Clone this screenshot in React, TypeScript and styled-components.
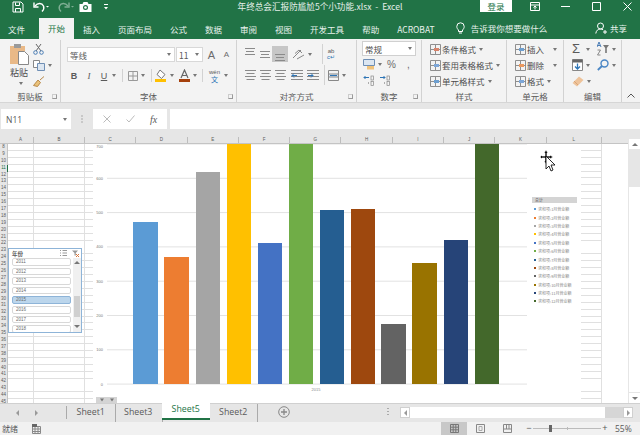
import styled, { createGlobalStyle } from "styled-components";

const GlobalStyle = createGlobalStyle`
  html, body {
    margin: 0;
    padding: 0;
    background: #fff;
  }
  * {
    box-sizing: border-box;
  }
`;

const font = `"Noto Sans CJK SC", "Open Sans", sans-serif`;

const BARS = [
  { x: 133, top: 222, color: "#5b9bd5", w: 25 },
  { x: 164, top: 257, color: "#ed7d31", w: 25 },
  { x: 196, top: 172, color: "#a5a5a5", w: 24 },
  { x: 227, top: 144, color: "#ffc000", w: 24 },
  { x: 258, top: 243, color: "#4472c4", w: 24 },
  { x: 289, top: 144, color: "#70ad47", w: 24 },
  { x: 320, top: 210, color: "#255e91", w: 24 },
  { x: 351, top: 209, color: "#9e480e", w: 24 },
  { x: 381, top: 324, color: "#636363", w: 25 },
  { x: 412, top: 263, color: "#997300", w: 25 },
  { x: 444, top: 240, color: "#264478", w: 24 },
  { x: 475, top: 144, color: "#43682b", w: 24 },
];

const AXIS = [700, 600, 500, 400, 300, 200, 100, 0];
const COLUMNS = [
  { name: "C", w: 51.3 },
  { name: "D", w: 51.3 },
  { name: "E", w: 51.3 },
  { name: "F", w: 51.3 },
  { name: "G", w: 51.3 },
  { name: "H", w: 51.3 },
  { name: "I", w: 51.3 },
  { name: "J", w: 51.3 },
  { name: "K", w: 51.3 },
  { name: "L", w: 55 },
];
const ROWS = Array.from({ length: 38 }, (_, i) => i + 8);
const YEARS = ["2011", "2012", "2013", "2014", "2015", "2016", "2017", "2018"];
const TABS = ["插入", "页面布局", "公式", "数据", "审阅", "视图", "开发工具", "帮助", "ACROBAT"];
const SHEETS = ["Sheet1", "Sheet3", "Sheet5", "Sheet2"];

function Ico({ w, h, children }: { w: number; h: number; children: React.ReactNode }) {
  return (
    <svg width={w} height={h} viewBox={`0 0 ${w} ${h}`} fill="none" style={{ display: "block", flexShrink: 0 }}>
      {children}
    </svg>
  );
}

// horizontal text lines used by the alignment buttons
function Lines({ y, widths, w }: { y: number[]; widths: number[]; w: number }) {
  return (
    <>
      {y.map((v, i) => (
        <path key={v} d={`M${(w - widths[i]) / 2} ${v + 0.5}h${widths[i]}`} stroke="#8a8a8a" />
      ))}
    </>
  );
}

function CellsIcon({ accent }: { accent: string }) {
  return (
    <Ico w={13} h={13}>
      <path d="M1.5 1.5h10v10h-10zM1.5 6.5h10M6.5 1.5v10" stroke="#8f8f8f" />
      <rect x="5" y="5" width="5" height="3" fill={accent} />
    </Ico>
  );
}

function DecimalIcon({ dir }: { dir: "left" | "right" }) {
  return (
    <DecimalWrap>
      <Ico w={13} h={11}>
        <path d={dir === "left" ? "M6 2.5H1M2.5 1 1 2.5 2.5 4" : "M1 2.5h5M4.5 1 6 2.5 4.5 4"} stroke="#2e75b6" />
        <path d="M5 8h1" stroke="#666" />
        <rect x="8" y="1" width="2.5" height="4" stroke="#888" strokeWidth=".7" />
        <rect x="8" y="6.5" width="2.5" height="4" stroke="#888" strokeWidth=".7" />
      </Ico>
    </DecimalWrap>
  );
}

export default function App() {
  return (
    <Page>
      <GlobalStyle />
      <TitleBar>
        <Quick>
          <Slot $left={0}>
            <Ico w={12} h={12}>
              <path d="M1 1h8l2 2v8H1z" stroke="#fff" />
              <path d="M3.5 1.5v3h4v-3M3.5 11V7.5h5V11" stroke="#fff" />
            </Ico>
          </Slot>
          <Slot $left={8}>
            <Ico w={18} h={12}>
              <path d="M3 5c3-3.5 7-3 8.5 0 .8 2 0 4-1.500 5.500" stroke="#fff" strokeWidth="1.4" />
              <path d="M2 1.500V6h4.500" stroke="#fff" strokeWidth="1.4" />
              <path d="M14 5h3l-1.500 1.600z" fill="#fff" />
            </Ico>
          </Slot>
          <Slot $left={7}>
            <Ico w={18} h={12}>
              <path d="M11 5C8 1.500 4 2 2.500 5 1.700 7 2.500 9 4 10.500" stroke="#7fae94" strokeWidth="1.4" />
              <path d="M12 1.500V6H7.500" stroke="#7fae94" strokeWidth="1.4" />
              <path d="M14 5h3l-1.500 1.600z" fill="#7fae94" />
            </Ico>
          </Slot>
          <Slot $left={4}>
            <Ico w={13} h={12}>
              <path d="M.5 3h3l1-2h4l1 2h3v8H.5z" fill="#fff" />
              <circle cx="6.500" cy="6.500" r="2.500" fill="#217346" />
              <circle cx="6.500" cy="6.500" r="1.300" fill="#fff" />
            </Ico>
          </Slot>
          <Slot $left={11}>
            <Ico w={6} h={10}>
              <path d="M1 2.500h4" stroke="#fff" />
              <path d="M1 5h4L3 7.500z" fill="#fff" />
            </Ico>
          </Slot>
        </Quick>
        <DocTitle>年终总会汇报防尴尬5个小功能.xlsx&nbsp; - &nbsp;Excel</DocTitle>
        <WindowArea>
          <Login>登录</Login>
          <WinBtn>
            <Ico w={10} h={9}>
              <path d="M.5.500h9v8h-9zM.5 3h9" stroke="#fff" />
              <path d="M5 7.500V4M3.500 5.500 5 4l1.500 1.500" stroke="#fff" />
            </Ico>
          </WinBtn>
          <WinBtn>
            <Ico w={9} h={9}>
              <path d="M0 4.500h9" stroke="#fff" />
            </Ico>
          </WinBtn>
          <WinBtn>
            <Ico w={9} h={9}>
              <path d="M.5.500h8v8h-8z" stroke="#fff" />
            </Ico>
          </WinBtn>
          <WinBtn>
            <Ico w={9} h={9}>
              <path d="M.5.500l8 8M8.500.500l-8 8" stroke="#fff" />
            </Ico>
          </WinBtn>
        </WindowArea>
      </TitleBar>

      <TabStrip>
        <FileTab>文件</FileTab>
        <ActiveTab>开始</ActiveTab>
        {TABS.map((t) => (
          <Tab key={t}>{t}</Tab>
        ))}
        <TellMe>
          <Ico w={9} h={12}>
            <path d="M2.500 8C1.500 7 .8 6 .8 4.500a3.700 3.700 0 0 1 7.400 0C8.200 6 7.500 7 6.500 8v1.500h-4zM3 11h3" stroke="#fff" />
          </Ico>
          告诉我你想要做什么
        </TellMe>
        <Share>
          <Ico w={12} h={12}>
            <circle cx="5.500" cy="4" r="3" stroke="#fff" />
            <path d="M.8 11.500C1.200 8.500 3 7 5.500 7c1 0 2 .3 2.700.9M8 10h4M10 8v4" stroke="#fff" />
          </Ico>
          共享
        </Share>
      </TabStrip>

      <Ribbon>
        <Group $w={61}>
          <ClipBody>
            <PasteCol>
              <Ico w={21} h={22}>
                <path d="M1 3h15v18H1z" fill="#e9b987" />
                <path d="M5 1h7v4H5z" fill="#9a9a9a" />
                <path d="M9.500 8.500h6l4 4v9h-10z" fill="#fff" stroke="#888" />
              </Ico>
              <PasteLabel>粘贴</PasteLabel>
              <Caret />
            </PasteCol>
            <ClipTools>
              <Ico w={11} h={11}>
                <path d="M3 0l5 7M8 0 3 7" stroke="#666" />
                <circle cx="2.500" cy="8.500" r="1.800" stroke="#4a7db5" />
                <circle cx="8.500" cy="8.500" r="1.800" stroke="#4a7db5" />
              </Ico>
              <ToolRow>
                <Ico w={12} h={11}>
                  <path d="M.5.500h6v7h-6z" fill="#fff" stroke="#888" />
                  <path d="M4.500 3.500h7v7h-7z" fill="#dce6f1" stroke="#6f8fb5" />
                </Ico>
                <Caret />
              </ToolRow>
              <Ico w={12} h={11}>
                <path d="M7 4 11 .5M.5 9.500 5 4l2.500 2.500-3 4z" stroke="#b8894a" fill="#eac27a" />
              </Ico>
            </ClipTools>
          </ClipBody>
          <GroupFoot>
            剪贴板
            <Launcher />
          </GroupFoot>
        </Group>

        <Group $w={176}>
          <FontBody>
            <Row>
              <FontSelect $w={108}>
                等线
                <Caret />
              </FontSelect>
              <FontSelect $w={27}>
                11
                <Caret />
              </FontSelect>
              <GrowA $size={11}>A</GrowA>
              <GrowA $size={8}>A</GrowA>
            </Row>
            <Row>
              <FmtBtn $left={2}>
                <b>B</b>
              </FmtBtn>
              <FmtBtn $left={5}>
                <i style={{ fontFamily: "Liberation Serif" }}>I</i>
              </FmtBtn>
              <FmtBtn $left={5}>
                <u>U</u>
              </FmtBtn>
              <Caret />
              <Sep $left={6} />
              <Slot $left={5}>
                <Ico w={10} h={10}>
                  <path d="M.5.500h9v9h-9zM.5 5h9M5 .5v9" stroke="#999" />
                </Ico>
              </Slot>
              <Caret />
              <Sep $left={6} />
              <Slot $left={3}>
                <Ico w={12} h={13}>
                  <path d="M5 1l5 4.500-3.500 4L2 5.500z" fill="#fff" stroke="#777" />
                  <rect y="10" width="11" height="3" fill="#ffc000" />
                </Ico>
              </Slot>
              <Caret />
              <Slot $left={5}>
                <Ico w={11} h={13}>
                  <path d="M2 9 5.500 1 9 9M3.300 6.500h4.400" stroke="#666" strokeWidth="1.2" />
                  <rect y="10" width="11" height="3" fill="#a5400c" />
                </Ico>
              </Slot>
              <Caret />
              <Sep $left={5} />
              <WenBtn>
                <WenTop>wén</WenTop>
                <WenBottom>文</WenBottom>
              </WenBtn>
              <Caret />
            </Row>
          </FontBody>
          <GroupFoot>
            字体
            <Launcher />
          </GroupFoot>
        </Group>

        <Group $w={120}>
          <AlignBody>
            <AlignRow>
              <Slot $left={0}>
                <Ico w={10} h={16}>
                  <Lines w={10} y={[2, 5, 8]} widths={[10, 8, 10]} />
                </Ico>
              </Slot>
              <Slot $left={5}>
                <Ico w={10} h={16}>
                  <Lines w={10} y={[5, 8, 11]} widths={[10, 8, 10]} />
                </Ico>
              </Slot>
              <AlignSelected>
                <Ico w={10} h={16}>
                  <Lines w={10} y={[8, 11, 14]} widths={[10, 8, 10]} />
                </Ico>
              </AlignSelected>
              <Slot $left={4}>
                <Ico w={13} h={12}>
                  <path d="M1 10 9 2M3 5.500 7 2l3 3M5 11l7-4" stroke="#888" />
                </Ico>
              </Slot>
              <Caret />
              <Sep $left={10} $tall />
              <WrapBtn>
                <WenTop>ab</WenTop>
                <WrapC>c↵</WrapC>
              </WrapBtn>
            </AlignRow>
            <AlignRow>
              {[0, 4, 4].map((left, i) => (
                <Slot $left={left} key={i}>
                  <Ico w={11} h={11}>
                    <Lines w={11} y={[0, 3, 6, 9]} widths={[11, 8, 11, 8]} />
                  </Ico>
                </Slot>
              ))}
              <Slot $left={5}>
                <Ico w={12} h={11}>
                  <Lines w={12} y={[0, 3, 6, 9]} widths={[12, 12, 12, 12]} />
                  <path d="M6 5.500H1M3 3.500l-2 2 2 2" stroke="#2e75b6" />
                </Ico>
              </Slot>
              <Slot $left={4}>
                <Ico w={12} h={11}>
                  <Lines w={12} y={[0, 3, 6, 9]} widths={[12, 12, 12, 12]} />
                  <path d="M1 5.500h5M4 3.500l2 2-2 2" stroke="#2e75b6" />
                </Ico>
              </Slot>
              <Sep $left={5} $tall />
              <Slot $left={3}>
                <Ico w={11} h={11}>
                  <path d="M.5.500h10v10H.5z" stroke="#888" />
                  <path d="M.5 4h10v3H.5z" fill="#dce6f1" stroke="#888" />
                  <path d="M2 5.500h7" stroke="#2e75b6" />
                </Ico>
              </Slot>
              <Caret />
            </AlignRow>
          </AlignBody>
          <GroupFoot>
            对齐方式
            <Launcher />
          </GroupFoot>
        </Group>

        <Group $w={65}>
          <NumberBody>
            <NumberSelect>
              常规
              <Caret />
            </NumberSelect>
            <NumberRow>
              <Ico w={12} h={11}>
                <path d="M.5.500h11v6H.5z" fill="#dce6f1" stroke="#6f8fb5" />
                <path d="M4 7h7v3.500H4z" fill="#f0c27a" />
              </Ico>
              <Caret />
              <NumGlyph>%</NumGlyph>
              <NumGlyph>,</NumGlyph>
            </NumberRow>
            <NumberRow>
              <DecimalIcon dir="left" />
              <DecimalIcon dir="right" />
            </NumberRow>
          </NumberBody>
          <GroupFoot>
            数字
            <Launcher />
          </GroupFoot>
        </Group>

        <Group $w={85}>
          <ListBody>
            <ListItem>
              <CellsIcon accent="#d9836a" />
              条件格式
              <Caret />
            </ListItem>
            <ListItem>
              <CellsIcon accent="#7da7d9" />
              套用表格格式
              <Caret />
            </ListItem>
            <ListItem>
              <CellsIcon accent="#6d9fd0" />
              单元格样式
              <Caret />
            </ListItem>
          </ListBody>
          <GroupFoot>样式</GroupFoot>
        </Group>

        <Group $w={57}>
          <ListBody>
            <ListItem>
              <CellsIcon accent="#6d9fd0" />
              插入
              <WideCaret />
            </ListItem>
            <ListItem>
              <CellsIcon accent="#ed9a5f" />
              删除
              <WideCaret />
            </ListItem>
            <ListItem>
              <CellsIcon accent="#7da7d9" />
              格式
              <Caret />
            </ListItem>
          </ListBody>
          <GroupFoot>单元格</GroupFoot>
        </Group>

        <Group $w={58}>
          <EditBody>
            <EditRow>
              <Sigma>Σ</Sigma>
              <Caret />
              <SortGlyph>
                <Ico w={12} h={14}>
                  <path d="M0 5 2 0l2 5M.7 3.500h2.600" stroke="#4a7db5" />
                  <path d="M.5 8h3L.5 13h3" stroke="#888" />
                  <path d="M6 3h6L9.800 6v5H8.200V6z" fill="#777" />
                </Ico>
              </SortGlyph>
              <Caret />
            </EditRow>
            <EditRow>
              <Slot $left={0}>
                <Ico w={11} h={12}>
                  <path d="M.5.500h10v11H.5z" fill="#fff" stroke="#888" />
                  <path d="M.5.500h10v3H.5z" fill="#666" />
                  <path d="M5.500 4.500v5M3 7.500 5.500 10 8 7.500" stroke="#2e75b6" strokeWidth="1.3" />
                </Ico>
              </Slot>
              <Caret />
              <SortGlyph>
                <Ico w={12} h={12}>
                  <circle cx="7.500" cy="4.500" r="3.500" stroke="#4a86c5" strokeWidth="1.4" />
                  <path d="M5 7 .8 11" stroke="#4a86c5" strokeWidth="1.8" />
                </Ico>
              </SortGlyph>
              <Caret />
            </EditRow>
            <EditRow>
              <Slot $left={0}>
                <Ico w={12} h={11}>
                  <path d="M.5 7 7 .5 11.500 4 5 10.500z" fill="#eec39a" />
                  <path d="M2 5l4 4" stroke="#d9a578" />
                </Ico>
              </Slot>
              <Caret />
            </EditRow>
          </EditBody>
          <GroupFoot>编辑</GroupFoot>
        </Group>

        <Collapse>
          <Ico w={8} h={5}>
            <path d="M.5 4.500 4 1l3.500 3.500" stroke="#555" />
          </Ico>
        </Collapse>
      </Ribbon>

      <FormulaZone>
        <NameBox>
          N11
          <Caret />
        </NameBox>
        <Grip />
        <FormulaBtns>
          <Ico w={8} h={8}>
            <path d="M.5.500l7 7M7.500.500l-7 7" stroke="#bbb" />
          </Ico>
          <Ico w={9} h={8}>
            <path d="M.5 4.500 3 7 8.500.500" stroke="#bbb" />
          </Ico>
          <Fx>fx</Fx>
        </FormulaBtns>
        <FormulaInput />
      </FormulaZone>

      <SheetZone>
        <SheetMain>
          <ColHeaders>
            <Corner />
            <ColHead $w={26}>A</ColHead>
            <ColHead $w={51}>B</ColHead>
            {COLUMNS.map((c) => (
              <ColHead key={c.name} $w={c.w}>
                {c.name}
              </ColHead>
            ))}
          </ColHeaders>
          <GridArea>
            <RowHeaders>
              {ROWS.map((r) => (
                <RowHead key={r} $active={r === 11}>
                  {r}
                </RowHead>
              ))}
            </RowHeaders>
            <Cells $w={26} />
            <Cells $w={51} />
            {COLUMNS.map((c) => (
              <Cells key={c.name} $w={c.w} />
            ))}

            <Slicer>
              <SlicerHead>
                年份
                <SlicerIcons>
                  <Ico w={7} h={6}>
                    <path d="M0 .5h1M0 3h1M0 5.500h1M2.500.5H7M2.500 3H7M2.500 5.500H7" stroke="#999" />
                  </Ico>
                  <Ico w={7} h={7}>
                    <path d="M0 .5h6L3.800 3v2.500H2.500V3z" fill="#999" />
                    <path d="M4 4l3 3M7 4 4 7" stroke="#d9763a" />
                  </Ico>
                </SlicerIcons>
              </SlicerHead>
              <SlicerBody>
                <SlicerList>
                  {YEARS.map((y) => (
                    <SlicerItem key={y} $on={y === "2015"}>
                      {y}
                    </SlicerItem>
                  ))}
                </SlicerList>
                <SlicerScroll>
                  <Tri $up />
                  <SlicerThumb />
                  <Tri />
                </SlicerScroll>
              </SlicerBody>
            </Slicer>

            <ChartFrame>
              <svg width="439" height="259" viewBox="93 144 439 259" style={{ display: "block", flexShrink: 0 }}>
                {AXIS.map((v, i) => {
                  const y = 144 + i * 34.3;
                  return (
                    <g key={v}>
                      <line x1="107" x2="527" y1={y} y2={y} stroke="#e2e2e2" strokeWidth="1" />
                      <text
                        x="103"
                        y={i === 0 ? y + 3.5 : y + 1.5}
                        textAnchor="end"
                        fontSize="4"
                        fill="#777"
                        fontFamily="Liberation Sans"
                      >
                        {v}
                      </text>
                    </g>
                  );
                })}
                {BARS.map((b) => (
                  <rect key={b.x} x={b.x} y={b.top} width={b.w} height={384 - b.top} fill={b.color} />
                ))}
                <text x="316" y="391" textAnchor="middle" fontSize="4" fill="#888" fontFamily="Liberation Sans">
                  2015
                </text>
              </svg>
              <Legend>
                <LegendHead>总计</LegendHead>
                {BARS.map((b, i) => (
                  <LegendItem key={b.x}>
                    <LegendDot style={{ background: b.color }} />
                    求和项:{i + 1}月营业额
                  </LegendItem>
                ))}
              </Legend>
              <FieldBtn>
                <Ico w={14} h={4}>
                  <path d="M0 .5h4L2 3.500zM10 .5h4l-2 3z" fill="#777" />
                </Ico>
              </FieldBtn>
            </ChartFrame>

            <MoveCursor>
              <svg width="16" height="22" viewBox="0 0 16 22">
                <path d="M6 0 8 3H7v3h3V5l3 2-3 2V8H7v3h1l-2 3-2-3h1V8H2v1L0 7l2-2v1h3V3H4z" fill="#111" stroke="#fff" strokeWidth=".6" />
                <path d="M6 6v13l3-3 2 5 2-1-2-5h4z" fill="#fff" stroke="#111" strokeWidth=".9" />
              </svg>
            </MoveCursor>
          </GridArea>
        </SheetMain>
        <VScroll>
          <ScrollArrow>
            <Tri $up />
          </ScrollArrow>
          <VTrack>
            <VThumb />
          </VTrack>
          <ScrollArrow>
            <Tri />
          </ScrollArrow>
        </VScroll>
      </SheetZone>

      <SheetBar>
        <SheetNav>
          <NavTri $left />
          <NavTri />
        </SheetNav>
        {SHEETS.map((s) => (
          <SheetTab key={s} $on={s === "Sheet5"}>
            {s}
          </SheetTab>
        ))}
        <AddSheet>
          <Ico w={12} h={12}>
            <circle cx="6" cy="6" r="5.300" stroke="#888" />
            <path d="M3 6h6M6 3v6" stroke="#888" strokeWidth="1.3" />
          </Ico>
        </AddSheet>
        <BarGrip />
        <HScroll>
          <HArrow>
            <NavTri $left />
          </HArrow>
          <HThumb />
          <HArrow>
            <NavTri />
          </HArrow>
        </HScroll>
      </SheetBar>

      <StatusBar>
        <StatusText>就绪</StatusText>
        <MacroIcon>
          <Ico w={9} h={10}>
            <path d="M.5 2.500h8v7h-8zM.5 5h8M.5 7.500h8M3 2.500v7M6 2.500v7" stroke="#888" />
            <rect width="5" height="3" fill="#666" />
          </Ico>
        </MacroIcon>
        <ViewBtn $on>
          <Ico w={9} h={9}>
            <path d="M.5.500h8v8h-8zM.5 3.200h8M.5 5.800h8M3.200.5v8M5.800.5v8" stroke="#777" />
          </Ico>
        </ViewBtn>
        <ViewBtn>
          <Ico w={9} h={9}>
            <path d="M.5.500h8v8h-8z" stroke="#888" />
            <path d="M3 2.500h3v4H3z" stroke="#aaa" />
          </Ico>
        </ViewBtn>
        <ViewBtn>
          <Ico w={9} h={9}>
            <path d="M.5.500h8v8h-8zM.5 5h8M3.500.5V5M6 .5V5" stroke="#888" />
          </Ico>
        </ViewBtn>
        <ZoomArea>
          <ZoomSign>−</ZoomSign>
          <ZoomTrack>
            <ZoomTick />
            <ZoomThumb />
          </ZoomTrack>
          <ZoomSign>+</ZoomSign>
          <ZoomText>55%</ZoomText>
        </ZoomArea>
      </StatusBar>
    </Page>
  );
}

const Page = styled.div`
  width: 640px;
  height: 435px;
  display: flex;
  flex-direction: column;
  overflow: hidden;
  font-family: ${font};
  color: #4d4d4d;
  background: #e6e6e6;
`;

const TitleBar = styled.header`
  height: 19px;
  flex-shrink: 0;
  background: #217346;
  display: grid;
  grid-template-columns: 1fr auto 1fr;
  color: #e4efe9;
`;

const Quick = styled.div`
  display: flex;
  align-items: center;
  padding: 0 0 5px 12px;
`;

const DocTitle = styled.div`
  font-size: 8.6px;
  line-height: 13px;
  white-space: nowrap;
`;

const WindowArea = styled.div`
  display: flex;
  justify-content: flex-end;
  margin-right: -3px;
`;

const Login = styled.div`
  width: 32px;
  height: 12px;
  background: #fff;
  color: #217346;
  font-size: 8.5px;
  line-height: 12px;
  text-align: center;
  margin-right: 7px;
`;

const WinBtn = styled.div`
  width: 31px;
  height: 12px;
  display: flex;
  align-items: center;
  justify-content: center;
`;

const TabStrip = styled.nav`
  height: 20px;
  flex-shrink: 0;
  background: #217346;
  display: flex;
  font-size: 8.5px;
  color: #e8f2ed;
  white-space: nowrap;
`;

const Tab = styled.div`
  padding: 4px 9px 0;
`;

const FileTab = styled(Tab)`
  padding-left: 8px;
  padding-right: 14px;
`;

const ActiveTab = styled(Tab)`
  width: 35px;
  padding: 4px 0 0;
  margin-top: -1px;
  text-align: center;
  background: #f3f3f3;
  color: #217346;
`;

const TellMe = styled.div`
  display: flex;
  align-items: center;
  gap: 6px;
  padding: 0 0 2px 12px;
`;

const Share = styled.div`
  margin-left: auto;
  display: flex;
  align-items: center;
  gap: 3px;
  padding: 0 13px 2px 0;
`;

const Ribbon = styled.section`
  height: 64px;
  flex-shrink: 0;
  background: #f3f3f3;
  display: flex;
  font-size: 8.5px;
  border-bottom: 1px solid #d6d6d6;
`;

const Group = styled.div<{ $w: number }>`
  width: ${(p) => p.$w}px;
  height: 62px;
  flex-shrink: 0;
  margin-top: 1px;
  border-right: 1px solid #d2d2d2;
  display: flex;
  flex-direction: column;
  position: relative;
`;

const GroupFoot = styled.div`
  height: 12px;
  flex-shrink: 0;
  font-size: 8.5px;
  line-height: 12px;
  text-align: center;
  color: #5a5a5a;
`;

const Launcher = styled.span`
  position: absolute;
  right: 3px;
  bottom: 3px;
  width: 5px;
  height: 5px;
  border: 1px solid #999;
  border-top-color: #ccc;
  border-left-color: #ccc;
`;

const Caret = styled.span`
  display: inline-block;
  flex-shrink: 0;
  width: 0;
  height: 0;
  margin-left: 3px;
  border-left: 2.5px solid transparent;
  border-right: 2.5px solid transparent;
  border-top: 3px solid #777;
`;

const WideCaret = styled(Caret)`
  margin-left: 9px;
`;

const ClipBody = styled.div`
  flex: 1;
  display: flex;
`;

const PasteCol = styled.div`
  width: 33px;
  padding: 3px 0 0 5px;
  display: flex;
  flex-direction: column;
  align-items: center;
`;

const PasteLabel = styled.div`
  font-size: 9px;
  line-height: 12px;
  margin: 2px 0 3px;
`;

const ClipTools = styled.div`
  display: flex;
  flex-direction: column;
  gap: 5px;
  padding-top: 4px;
`;

const ToolRow = styled.div`
  display: flex;
  align-items: center;
`;

const FontBody = styled.div`
  flex: 1;
  display: flex;
  flex-direction: column;
  gap: 6px;
  padding: 7px 0 0 6px;
`;

const Row = styled.div`
  display: flex;
  align-items: center;
  height: 15px;
`;

const FontSelect = styled.div<{ $w: number }>`
  width: ${(p) => p.$w}px;
  height: 15px;
  margin-right: 1px;
  background: #fff;
  border: 1px solid #d8d8d8;
  display: flex;
  align-items: center;
  justify-content: space-between;
  padding: 0 3px 0 2px;
  font-size: 8.5px;
  color: #5a5a5a;
`;

const GrowA = styled.div<{ $size: number }>`
  width: 15px;
  text-align: center;
  font-family: "Liberation Sans", sans-serif;
  font-size: ${(p) => p.$size}px;
  color: #6b6b6b;
`;

const FmtBtn = styled.div<{ $left: number }>`
  width: 10px;
  margin-left: ${(p) => p.$left}px;
  text-align: center;
  font-family: "Liberation Sans", sans-serif;
  font-size: 9px;
  color: #5a5a5a;
`;

const Sep = styled.div<{ $left: number; $tall?: boolean }>`
  width: 1px;
  height: ${(p) => (p.$tall ? 20 : 13)}px;
  flex-shrink: 0;
  margin-left: ${(p) => p.$left}px;
  background: #d2d2d2;
`;

const Slot = styled.div<{ $left: number }>`
  margin-left: ${(p) => p.$left}px;
  flex-shrink: 0;
`;

const WenBtn = styled.div`
  margin-left: 5px;
  width: 13px;
  display: flex;
  flex-direction: column;
  align-items: center;
`;

const WenTop = styled.div`
  font-family: "Liberation Sans", sans-serif;
  font-size: 6px;
  line-height: 6px;
  color: #5a5a5a;
`;

const WenBottom = styled.div`
  font-size: 7px;
  line-height: 8px;
  color: #2e75b6;
`;

const AlignBody = styled.div`
  flex: 1;
  display: flex;
  flex-direction: column;
  padding: 4px 0 0 8px;
  gap: 1px;
`;

const AlignRow = styled.div`
  display: flex;
  align-items: center;
  height: 20px;
`;

const AlignSelected = styled.div`
  width: 16px;
  height: 16px;
  margin-left: 2px;
  display: flex;
  justify-content: center;
  background: #c6c6c6;
`;

const WrapBtn = styled.div`
  display: flex;
  flex-direction: column;
  align-items: center;
  margin-left: 4px;
`;

const WrapC = styled(WenTop)`
  color: #2e75b6;
`;

const NumberBody = styled.div`
  flex: 1;
  padding: 1px 0 0 5px;
  display: flex;
  flex-direction: column;
  gap: 1.5px;
`;

const NumberSelect = styled.div`
  width: 54px;
  height: 15px;
  background: #fff;
  border: 1px solid #d0d0d0;
  display: flex;
  align-items: center;
  justify-content: space-between;
  padding: 0 3px 0 2px;
  font-size: 8.5px;
`;

const NumberRow = styled.div`
  display: flex;
  align-items: center;
  height: 14px;
  padding-left: 1px;
`;

const NumGlyph = styled.div`
  width: 15px;
  margin-left: 2px;
  text-align: center;
  font-family: "Liberation Sans", sans-serif;
  font-size: 10px;
  color: #6b6b6b;
`;

const DecimalWrap = styled.div`
  width: 16px;
  display: flex;
`;

const ListBody = styled.div`
  flex: 1;
  display: flex;
  flex-direction: column;
  gap: 2px;
  padding: 2px 0 0 7px;
`;

const ListItem = styled.div`
  height: 14px;
  display: flex;
  align-items: center;
  white-space: nowrap;
  font-size: 8.5px;
`;

const EditBody = styled.div`
  flex: 1;
  display: flex;
  flex-direction: column;
  gap: 2px;
  padding: 2px 0 0 8px;
`;

const EditRow = styled.div`
  height: 14px;
  display: flex;
  align-items: center;
`;

const Sigma = styled.div`
  width: 11px;
  font-family: "Liberation Sans", sans-serif;
  font-size: 13px;
  line-height: 14px;
  color: #5a5a5a;
`;

const SortGlyph = styled.div`
  margin-left: 7px;
  flex-shrink: 0;
`;

const Collapse = styled.div`
  flex: 1;
  display: flex;
  justify-content: center;
  align-items: flex-end;
  padding-bottom: 4px;
`;

const FormulaZone = styled.div`
  height: 34px;
  flex-shrink: 0;
  background: #e6e6e6;
  display: flex;
  padding: 6px 0 8px 1px;
`;

const NameBox = styled.div`
  width: 70px;
  background: #fff;
  display: flex;
  align-items: center;
  justify-content: space-between;
  padding: 0 4px 0 5px;
  font-family: "Open Sans", sans-serif;
  font-size: 8.5px;
  color: #5a5a5a;
`;

const Grip = styled.div`
  width: 22px;
  flex-shrink: 0;
  margin: 5px 0;
  background: radial-gradient(circle, #aaa 0.8px, transparent 1px) center / 2px 3px repeat-y;
`;

const FormulaBtns = styled.div`
  width: 74px;
  background: #fff;
  display: flex;
  align-items: center;
  gap: 15px;
  padding-left: 10px;
`;

const Fx = styled.div`
  font-family: "Liberation Serif", serif;
  font-style: italic;
  font-size: 10px;
  color: #5a5a5a;
`;

const FormulaInput = styled.div`
  flex: 1;
  margin-left: 3px;
  background: #fff;
`;

const SheetZone = styled.div`
  flex: 1;
  min-height: 0;
  display: flex;
`;

const SheetMain = styled.div`
  width: 628px;
  display: flex;
  flex-direction: column;
  overflow: hidden;
`;

const ColHeaders = styled.div`
  height: 7px;
  flex-shrink: 0;
  display: flex;
  background: #e6e6e6;
  border-bottom: 1px solid #c4c4c4;
  font-family: "Liberation Sans", sans-serif;
  font-size: 4.5px;
  line-height: 6px;
  color: #5a5a5a;
`;

const Corner = styled.div`
  width: 8px;
  flex-shrink: 0;
`;

const ColHead = styled.div<{ $w: number }>`
  width: ${(p) => p.$w}px;
  flex-shrink: 0;
  text-align: center;
  border-right: 1px solid #bdbdbd;
`;

const GridArea = styled.div`
  flex: 1;
  min-height: 0;
  position: relative;
  display: flex;
  background: #fff;
`;

const RowHeaders = styled.div`
  width: 8px;
  flex-shrink: 0;
  background: #e6e6e6;
  overflow: hidden;
`;

const RowHead = styled.div<{ $active: boolean }>`
  height: 6.9px;
  font-family: "Liberation Sans", sans-serif;
  font-size: 4.5px;
  line-height: 6.9px;
  text-align: center;
  color: ${(p) => (p.$active ? "#217346" : "#5a5a5a")};
  border-right: ${(p) => (p.$active ? "1.5px solid #217346" : "1px solid #c4c4c4")};
`;

const Cells = styled.div<{ $w: number }>`
  width: ${(p) => p.$w}px;
  flex-shrink: 0;
  border-right: 1px solid #e0e0e0;
  background: repeating-linear-gradient(to bottom, transparent 0, transparent 5.9px, #e0e0e0 5.9px, #e0e0e0 6.9px);
`;

const Slicer = styled.aside`
  position: absolute;
  left: 8px;
  top: 104px;
  width: 74px;
  height: 85px;
  background: #fff;
  border: 1px solid #8eb4d8;
  display: flex;
  flex-direction: column;
  overflow: hidden;
`;

const SlicerHead = styled.div`
  height: 9px;
  flex-shrink: 0;
  display: flex;
  align-items: center;
  justify-content: space-between;
  padding: 0 2px 0 3px;
  font-size: 5.5px;
  font-weight: 700;
  color: #5a5a5a;
`;

const SlicerIcons = styled.div`
  display: flex;
  gap: 5px;
`;

const SlicerBody = styled.div`
  flex: 1;
  min-height: 0;
  display: flex;
  padding-left: 3px;
`;

const SlicerList = styled.div`
  width: 59px;
  display: flex;
  flex-direction: column;
  gap: 2px;
  overflow: hidden;
`;

const SlicerItem = styled.div<{ $on: boolean }>`
  height: 7.6px;
  flex-shrink: 0;
  border: 1px solid ${(p) => (p.$on ? "#8eb4d8" : "#d8d8d8")};
  border-radius: 2px;
  background: ${(p) => (p.$on ? "#bcd6ec" : "#fff")};
  font-family: "Liberation Sans", sans-serif;
  font-size: 4.5px;
  line-height: 5.6px;
  padding-left: 3px;
  color: #6b6b6b;
`;

const SlicerScroll = styled.div`
  width: 8px;
  margin-left: 2px;
  padding: 3px 0 4px;
  background: #f0f0f0;
  display: flex;
  flex-direction: column;
  align-items: center;
  justify-content: space-between;
  position: relative;
`;

const SlicerThumb = styled.div`
  position: absolute;
  left: 1px;
  top: 38px;
  width: 6px;
  height: 21px;
  background: #d0d0d0;
`;

const ChartFrame = styled.figure`
  position: absolute;
  left: 93px;
  top: 0;
  width: 488px;
  bottom: 0;
  margin: 0;
  background: #fff;
  display: flex;
`;

const Legend = styled.div`
  width: 45px;
  padding-top: 53px;
  font-size: 4px;
  color: #888;
  white-space: nowrap;
`;

const LegendHead = styled.div`
  height: 6px;
  line-height: 6px;
  padding-left: 3px;
  margin-bottom: 2px;
  background: #d4d4d4;
  color: #5a5a5a;
`;

const LegendItem = styled.div`
  height: 8.4px;
  display: flex;
  align-items: center;
  gap: 2px;
  padding-left: 2px;
`;

const LegendDot = styled.span`
  width: 2px;
  height: 2px;
  flex-shrink: 0;
`;

const FieldBtn = styled.div`
  position: absolute;
  left: 3px;
  bottom: 0;
  width: 21px;
  height: 6px;
  background: #d4d4d4;
  display: flex;
  align-items: center;
  justify-content: center;
`;

const MoveCursor = styled.div`
  position: absolute;
  left: 540px;
  top: 6px;
  width: 16px;
  height: 22px;
`;

const VScroll = styled.div`
  width: 12px;
  flex-shrink: 0;
  display: flex;
  flex-direction: column;
  background: #e6e6e6;
  padding-top: 2px;
`;

const ScrollArrow = styled.div`
  height: 10px;
  flex-shrink: 0;
  background: #fff;
  display: flex;
  align-items: center;
  justify-content: center;
  margin-left: 1px;
`;

const Tri = styled.span<{ $up?: boolean }>`
  width: 0;
  height: 0;
  border-left: 3px solid transparent;
  border-right: 3px solid transparent;
  ${(p) => (p.$up ? "border-bottom: 3px solid #777;" : "border-top: 3px solid #777;")}
`;

const VTrack = styled.div`
  flex: 1;
  padding-top: 38px;
  display: flex;
`;

const VThumb = styled.div`
  flex: 1;
  margin: 0 0 1px 1px;
  background: #fff;
`;

const SheetBar = styled.div`
  height: 19px;
  flex-shrink: 0;
  display: flex;
  background: #e6e6e6;
  border-top: 1px solid #d0d0d0;
  font-family: "Open Sans", sans-serif;
  font-size: 8.8px;
  color: #5a5a5a;
`;

const SheetNav = styled.div`
  width: 67px;
  flex-shrink: 0;
  display: flex;
  align-items: center;
  gap: 16px;
  padding-left: 16px;
  border-right: 1px solid #aaa;
  margin: 2px 0 3px;
`;

const NavTri = styled.span<{ $left?: boolean }>`
  width: 0;
  height: 0;
  border-top: 3px solid transparent;
  border-bottom: 3px solid transparent;
  ${(p) => (p.$left ? "border-right: 3px solid #999;" : "border-left: 3px solid #999;")}
`;

const SheetTab = styled.div<{ $on: boolean }>`
  width: 47.5px;
  flex-shrink: 0;
  display: flex;
  align-items: center;
  justify-content: center;
  padding-bottom: 3px;
  background: ${(p) => (p.$on ? "#fff" : "transparent")};
  color: ${(p) => (p.$on ? "#217346" : "#5a5a5a")};
  margin-top: ${(p) => (p.$on ? "-1px" : "0")};
  border-bottom: ${(p) => (p.$on ? "2px solid #217346" : "none")};
  height: ${(p) => (p.$on ? "17px" : "auto")};
  box-shadow: ${(p) => (p.$on ? "none" : "1px 0 0 #aaa")};
`;

const AddSheet = styled.div`
  margin-left: 21px;
  padding-top: 2px;
`;

const BarGrip = styled.div`
  width: 2px;
  margin: 3px 0 5px 97px;
  background: radial-gradient(circle, #aaa 0.8px, transparent 1px) 0 0 / 2px 3px repeat-y;
`;

const HScroll = styled.div`
  width: 233px;
  height: 11px;
  margin: 3px 0 0 11px;
  display: flex;
  background: #d6d6d6;
`;

const HArrow = styled.div`
  width: 10px;
  flex-shrink: 0;
  background: #fff;
  border: 1px solid #d0d0d0;
  display: flex;
  align-items: center;
  justify-content: center;
`;

const HThumb = styled.div`
  width: 195px;
  margin-right: 18px;
  background: #fff;
`;

const StatusBar = styled.footer`
  height: 13px;
  flex-shrink: 0;
  display: flex;
  align-items: center;
  background: #f1f1f1;
  font-size: 8px;
  color: #5a5a5a;
`;

const StatusText = styled.div`
  padding-left: 2px;
  width: 32px;
`;

const MacroIcon = styled.div`
  width: 409px;
`;

const ViewBtn = styled.div<{ $on?: boolean }>`
  width: 26px;
  height: 13px;
  flex-shrink: 0;
  display: flex;
  align-items: center;
  justify-content: center;
  background: ${(p) => (p.$on ? "#c8c8c8" : "transparent")};
  margin-right: ${(p) => (p.$on ? "0" : "1px")};
`;

const ZoomArea = styled.div`
  display: flex;
  align-items: center;
  margin-left: 4px;
`;

const ZoomSign = styled.div`
  width: 8px;
  text-align: center;
  font-family: "Liberation Sans", sans-serif;
  font-size: 9px;
  line-height: 9px;
`;

const ZoomTrack = styled.div`
  width: 68px;
  height: 1px;
  background: #bbb;
  position: relative;
`;

const ZoomTick = styled.div`
  position: absolute;
  left: 34px;
  top: -1px;
  width: 1px;
  height: 3px;
  background: #bbb;
`;

const ZoomThumb = styled.div`
  position: absolute;
  left: 16px;
  top: -3px;
  width: 3px;
  height: 7px;
  background: #666;
`;

const ZoomText = styled.div`
  margin-left: 6px;
  font-family: "Open Sans", sans-serif;
  font-size: 8.5px;
`;
